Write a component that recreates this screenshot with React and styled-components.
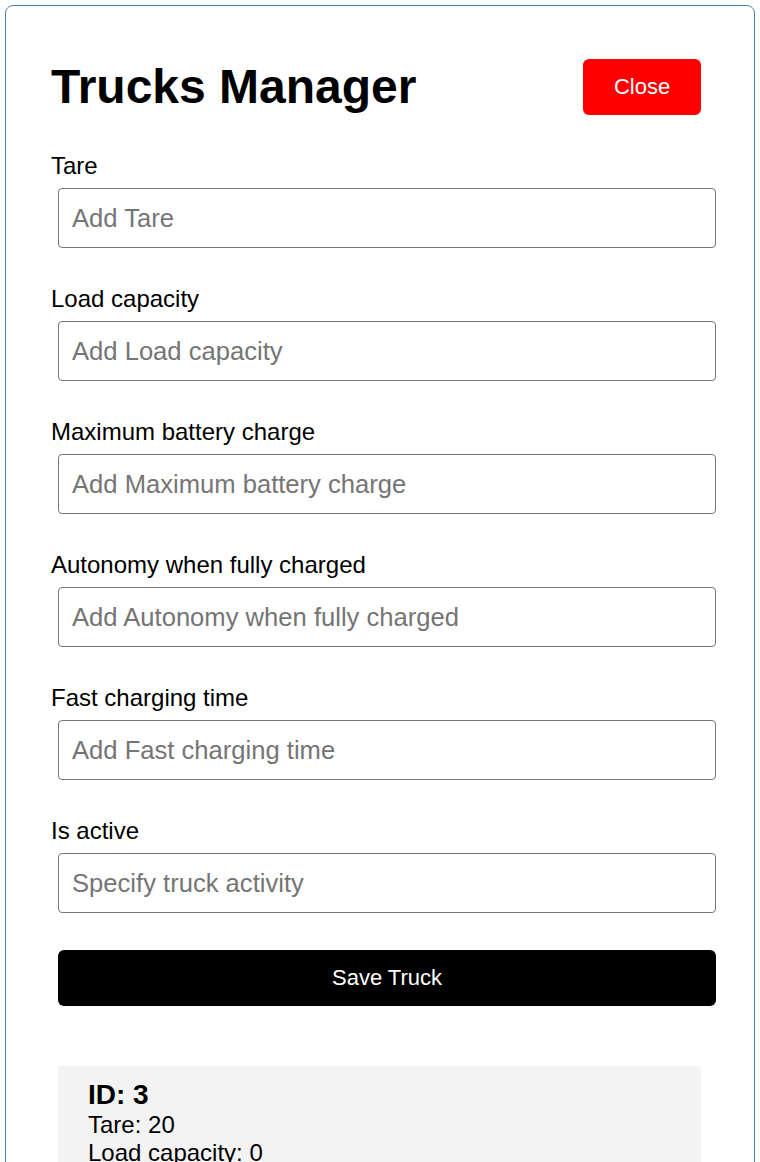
import React from "react";
import styled, { createGlobalStyle } from "styled-components";

const fields = [
  { label: "Tare", placeholder: "Add Tare" },
  { label: "Load capacity", placeholder: "Add Load capacity" },
  { label: "Maximum battery charge", placeholder: "Add Maximum battery charge" },
  { label: "Autonomy when fully charged", placeholder: "Add Autonomy when fully charged" },
  { label: "Fast charging time", placeholder: "Add Fast charging time" },
  { label: "Is active", placeholder: "Specify truck activity" },
];

const trucks = [
  { id: 3, tare: 20, load: 0, battery: 80, autonomy: 100, charging: 60, active: "true" },
];

export default function App() {
  return (
    <>
      <GlobalStyle />
      <Card>
        <Header>
          <Title>Trucks Manager</Title>
          <CloseButton>Close</CloseButton>
        </Header>
        <Form onSubmit={(e) => e.preventDefault()}>
          {fields.map((f) => (
            <Group key={f.label}>
              <Label>{f.label}</Label>
              <Input placeholder={f.placeholder} />
            </Group>
          ))}
          <SaveButton type="submit">Save Truck</SaveButton>
        </Form>
        <List>
          {trucks.map((t) => (
            <Item key={t.id}>
              <ItemId>ID: {t.id}</ItemId>
              <Line>Tare: {t.tare}</Line>
              <Line>Load capacity: {t.load}</Line>
              <Line>Maximum battery charge: {t.battery}</Line>
              <Line>Autonomy when fully charged: {t.autonomy}</Line>
              <Line>Fast charging time: {t.charging}</Line>
              <Line>Is active: {t.active}</Line>
            </Item>
          ))}
        </List>
      </Card>
    </>
  );
}

const GlobalStyle = createGlobalStyle`
  body {
    margin: 0;
    font-family: "Liberation Sans", Arial, sans-serif;
    background: #fff;
  }
`;

const Card = styled.div`
  margin: 5px;
  border: 1px solid #4682b4;
  border-radius: 8px;
  padding: 53px 31px 40px 45px;
  box-sizing: border-box;
`;

const Header = styled.div`
  display: flex;
  justify-content: space-between;
  align-items: flex-start;
  padding-right: 22px;
  margin-bottom: 37px;
`;

const Title = styled.h1`
  margin: 0;
  font-size: 48px;
  font-weight: bold;
  line-height: 55px;
  color: #000;
`;

const CloseButton = styled.button`
  width: 118px;
  height: 56px;
  border: none;
  border-radius: 6px;
  background: #ff0000;
  color: #fff;
  font-family: inherit;
  font-size: 22px;
  cursor: pointer;
`;

const Form = styled.form`
  display: flex;
  flex-direction: column;
`;

const Group = styled.div`
  display: flex;
  flex-direction: column;
  margin-bottom: 29px;
`;

const Label = styled.label`
  font-size: 24px;
  line-height: 28px;
  color: #000;
`;

const Input = styled.input`
  margin: 8px 7px;
  height: 60px;
  box-sizing: border-box;
  padding: 0 13px;
  border: 1px solid #767676;
  border-radius: 4px;
  font-family: inherit;
  font-size: 25.6px;
  &::placeholder {
    color: #757575;
  }
`;

const SaveButton = styled.button`
  margin: 0 7px;
  height: 56px;
  border: none;
  border-radius: 6px;
  background: #000;
  color: #fff;
  font-family: inherit;
  font-size: 22px;
  cursor: pointer;
`;

const List = styled.div`
  margin-top: 60px;
  margin-left: 7px;
  margin-right: 22px;
  display: flex;
  flex-direction: column;
  gap: 20px;
`;

const Item = styled.div`
  background: #f3f3f3;
  padding: 13px 30px;
`;

const ItemId = styled.div`
  font-size: 28px;
  font-weight: bold;
  line-height: 32px;
`;

const Line = styled.div`
  font-size: 24px;
  line-height: 28px;
`;
